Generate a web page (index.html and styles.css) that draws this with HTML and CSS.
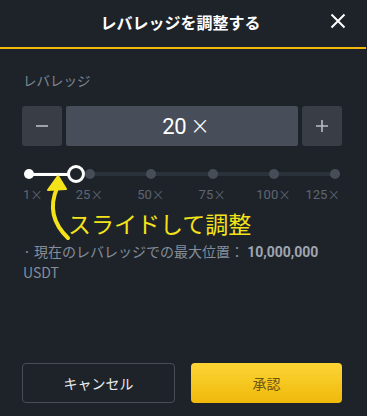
FILE: index.html
```html
<!DOCTYPE html>
<html>
<head>
    <title>レバレッジを調整する</title>
    <link rel="stylesheet" href="styles.css">
</head>
<body>
    <div class="modal">
        <div class="modal-header">
            <h2 class="modal-title">レバレッジを調整する</h2>
            <button class="close-button" aria-label="close">
                <svg width="16" height="16" viewBox="0 0 16 16">
                    <path d="M1.5 1.5 L14.5 14.5 M14.5 1.5 L1.5 14.5" stroke="#fff" stroke-width="2" fill="none"/>
                </svg>
            </button>
        </div>

        <div class="modal-body">
            <div class="field-label">レバレッジ</div>

            <div class="stepper">
                <button class="step-button">
                    <svg width="12" height="12" viewBox="0 0 12 12"><path d="M0 6 H12" stroke="#b7bdc6" stroke-width="1.6"/></svg>
                </button>
                <div class="step-value">20<span class="times">×</span></div>
                <button class="step-button">
                    <svg width="12" height="12" viewBox="0 0 12 12"><path d="M0 6 H12 M6 0 V12" stroke="#b7bdc6" stroke-width="1.6"/></svg>
                </button>
            </div>

            <div class="slider">
                <div class="slider-track"></div>
                <div class="slider-fill"></div>
                <div class="slider-marks">
                    <span class="mark active"></span>
                    <span class="mark"></span>
                    <span class="mark"></span>
                    <span class="mark"></span>
                    <span class="mark"></span>
                    <span class="mark"></span>
                </div>
                <div class="slider-thumb"></div>
            </div>
            <div class="slider-labels">
                <span class="tick first">1<span class="x">×</span></span>
                <span class="tick">25<span class="x">×</span></span>
                <span class="tick">50<span class="x">×</span></span>
                <span class="tick">75<span class="x">×</span></span>
                <span class="tick">100<span class="x">×</span></span>
                <span class="tick last">125<span class="x">×</span></span>
            </div>

            <div class="annotation">スライドして調整</div>
            <svg class="annotation-arrow" width="40" height="70" viewBox="0 0 40 70">
                <path d="M18 14 Q6 42 29 64" stroke="#f5e31a" stroke-width="4" fill="none" stroke-linecap="round"/>
                <path d="M19 2 L9 16 L27 15 Z" fill="#f5e31a" stroke="#f5e31a" stroke-width="2" stroke-linejoin="round"/>
            </svg>

            <p class="info">· 現在のレバレッジでの最大位置： <strong>10,000,000</strong> USDT</p>
        </div>

        <div class="modal-footer">
            <button class="btn btn-cancel">キャンセル</button>
            <button class="btn btn-confirm">承認</button>
        </div>
    </div>
</body>
</html>
```

FILE: styles.css
```css
body {
    margin: 0;
    background-color: #1e2329;
    font-family: "Noto Sans CJK JP", "Noto Sans", sans-serif;
    color: #eaecef;
}

.modal {
    position: relative;
    height: 416px;
    display: flex;
    flex-direction: column;
    background-color: #1e2329;
}

.modal-header {
    height: 47px;
    display: flex;
    align-items: center;
    justify-content: center;
    position: relative;
    border-bottom: 2px solid #f0b90b;
    margin-right: 1px;
}

.modal-title {
    margin: 0;
    font-size: 16px;
    font-weight: bold;
    color: #fff;
    margin-left: -5px;
    margin-top: -4px;
}

.close-button {
    position: absolute;
    right: 20px;
    top: 13px;
    background: none;
    border: none;
    padding: 0;
    width: 16px;
    height: 16px;
    cursor: pointer;
}

.modal-body {
    position: relative;
    padding: 0 23px 0 23px;
}

.field-label {
    margin-top: 23px;
    font-size: 13.5px;
    line-height: 16px;
    color: #7f8792;
}

.stepper {
    margin-top: 18px;
    margin-left: -1px;
    display: flex;
    gap: 4px;
    height: 40px;
    width: 320px;
}

.step-button {
    width: 40px;
    height: 40px;
    border: none;
    border-radius: 3px;
    background-color: #383d46;
    display: flex;
    align-items: center;
    justify-content: center;
    padding: 0;
}

.step-value {
    flex: 1;
    background-color: #474d59;
    border-radius: 2px;
    display: flex;
    align-items: center;
    justify-content: center;
    font-family: Roboto, sans-serif;
    font-size: 22px;
    letter-spacing: -0.5px;
    color: #fff;
    padding-left: 8px;
}

.times {
    font-family: "DejaVu Sans", sans-serif;
    font-weight: 200;
    font-size: 24px;
    margin-left: 4px;
}

.slider {
    position: relative;
    margin-top: 19px;
    margin-left: 1px;
    width: 316px;
    height: 18px;
}

.slider-track {
    position: absolute;
    left: 5px;
    right: 5px;
    top: 7px;
    height: 4px;
    background-color: #2b3139;
}

.slider-fill {
    position: absolute;
    left: 5px;
    width: 47px;
    top: 8px;
    height: 3px;
    background-color: #fff;
}

.slider-marks {
    position: relative;
    height: 18px;
    display: flex;
    align-items: center;
    justify-content: space-between;
}

.mark {
    width: 10px;
    height: 10px;
    border-radius: 50%;
    background-color: #474d57;
}

.mark.active {
    background-color: #fff;
}

.slider-thumb {
    position: absolute;
    left: 43px;
    top: 0;
    width: 12px;
    height: 12px;
    border: 3px solid #fff;
    border-radius: 50%;
    background-color: #1e2329;
}

.slider-labels {
    margin-top: 4px;
    margin-left: 1px;
    width: 316px;
    display: flex;
    justify-content: space-between;
    font-family: Roboto, sans-serif;
    font-size: 13px;
    line-height: 16px;
    color: #5e6673;
}

.tick {
    width: 10px;
    display: flex;
    justify-content: center;
    white-space: nowrap;
}

.tick .x {
    font-family: "DejaVu Sans", sans-serif;
    font-weight: 200;
    font-size: 15px;
}

.tick.first {
    justify-content: flex-start;
    margin-left: -1px;
}

.tick.last {
    justify-content: flex-end;
}

.annotation {
    margin-left: 45px;
    font-size: 23px;
    line-height: 36px;
    padding-top: 2px;
    color: #f5e31a;
    white-space: nowrap;
}

.annotation-arrow {
    position: absolute;
    left: 39px;
    top: 125px;
}

.info {
    margin: 0;
    font-size: 14px;
    line-height: 20px;
    color: #848e9c;
    width: 300px;
}

.info strong {
    color: #9fa6b0;
    font-family: Roboto, sans-serif;
    font-size: 14px;
}

.modal-footer {
    margin-top: auto;
    padding: 0 25px 13px 22px;
    display: flex;
    gap: 16px;
}

.btn {
    flex: 1;
    height: 40px;
    border-radius: 4px;
    font-family: "Noto Sans CJK JP", sans-serif;
    font-size: 14px;
    cursor: pointer;
}

.btn-cancel {
    background-color: transparent;
    border: 1px solid #474d57;
    color: #eaecef;
}

.btn-confirm {
    border: none;
    background: linear-gradient(#fcd535, #f0b90b);
    color: #6a5816;
}
```
